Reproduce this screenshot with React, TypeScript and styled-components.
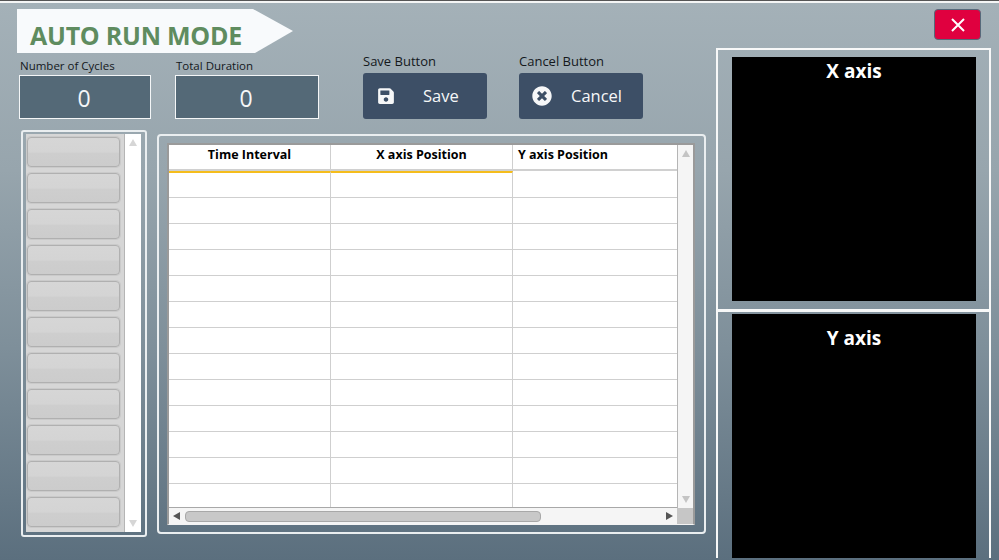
import React from "react";
import styled, { createGlobalStyle } from "styled-components";
import { FaSave, FaTimesCircle } from "react-icons/fa";

const GlobalStyle = createGlobalStyle`
  html, body {
    margin: 0;
    padding: 0;
    background: #555;
    overflow: hidden;
  }
  body {
    padding-top: 1px;
    font-family: "Open Sans", "Noto Sans", sans-serif;
  }
`;

const Screen = styled.div`
  display: flex;
  box-sizing: border-box;
  width: 999px;
  height: 559px;
  overflow: hidden;
  border-top: 2px solid #f4f5f5;
  background: linear-gradient(180deg, #a4b1b8 0%, #97a5ad 30%, #7e8f9a 62%, #5b6f7e 100%);
`;

const Main = styled.div`
  display: flex;
  flex-direction: column;
  width: 716px;
  flex: none;
`;

const Banner = styled.div`
  box-sizing: border-box;
  width: 276px;
  height: 44px;
  margin: 6px 0 0 17px;
  padding: 9px 0 0 13px;
  background: #f8fafc;
  clip-path: polygon(0 0, 236px 0, 100% 50%, 238px 100%, 0 100%);
  color: #5f8c5f;
  font-size: 25px;
  font-weight: 700;
  letter-spacing: -0.25px;
  line-height: 34px;
  white-space: nowrap;
`;

const Controls = styled.div`
  display: flex;
  align-items: flex-start;
  height: 77px;
  padding-left: 19px;
`;

const Group = styled.div<{ $left: number; $top: number }>`
  display: flex;
  flex-direction: column;
  margin-left: ${(p) => p.$left}px;
  margin-top: ${(p) => p.$top}px;
`;

const Caption = styled.div`
  height: 17px;
  padding-left: 1px;
  color: #14181c;
  font-size: 11.5px;
  line-height: 16px;
  white-space: nowrap;
`;

const ButtonCaption = styled(Caption)`
  height: 20px;
  padding-left: 0;
  font-size: 13px;
  line-height: 16px;
`;

const ValueBox = styled.div<{ $width: number }>`
  box-sizing: border-box;
  width: ${(p) => p.$width}px;
  height: 44px;
  padding-right: 2px;
  border: 1px solid #f4f6f7;
  background: #546977;
  color: #f4f6f7;
  font-size: 23px;
  line-height: 44px;
  text-align: center;
`;

const ActionButton = styled.button`
  display: flex;
  align-items: center;
  box-sizing: border-box;
  width: 124px;
  height: 46px;
  padding: 0;
  border: none;
  border-radius: 3px;
  background: #3d4f66;
  color: #f6f7f8;
  font-family: inherit;
  font-size: 16.5px;
  font-weight: 500;
`;

const ButtonLabel = styled.span`
  margin-bottom: 2px;
`;

const IconSlot = styled.span<{ $left: number; $width: number }>`
  display: flex;
  flex: none;
  box-sizing: border-box;
  width: ${(p) => p.$width}px;
  padding-left: ${(p) => p.$left}px;
`;

const Body = styled.div`
  display: flex;
  align-items: flex-start;
  padding-left: 21px;
`;

const ListPanel = styled.div`
  display: flex;
  box-sizing: border-box;
  width: 126px;
  height: 407px;
  margin-right: 10px;
  padding: 2px 4px 3px 3px;
  border: 2px solid #eaeef0;
  border-radius: 3px;
`;

const ListItems = styled.div`
  display: flex;
  flex-direction: column;
  gap: 6px;
  box-sizing: border-box;
  width: 98px;
  padding: 3px 0 0 1px;
  background: #d6d6d6;
`;

const ListItem = styled.div`
  box-sizing: border-box;
  width: 93px;
  height: 30px;
  border: 1px solid #b0b0b0;
  border-radius: 4px;
  background: linear-gradient(180deg, #d6d6d6 0%, #d4d4d4 50%, #cecece 55%, #cccccc 100%);
  box-shadow: 0 0 0 1px #cacaca;
`;

const VScroll = styled.div<{ $bg: string; $width: number }>`
  display: flex;
  flex-direction: column;
  align-items: center;
  justify-content: space-between;
  box-sizing: border-box;
  width: ${(p) => p.$width}px;
  padding: 5px 0;
  border-left: 1px solid #b5b5b5;
  background: ${(p) => p.$bg};
`;

const Arrow = styled.span<{ $dir: "up" | "down" | "left" | "right"; $color: string }>`
  flex: none;
  width: 0;
  height: 0;
  border-style: solid;
  border-color: transparent;
  ${(p) =>
    p.$dir === "up"
      ? `border-width: 0 4px 7px; border-bottom-color: ${p.$color};`
      : p.$dir === "down"
      ? `border-width: 7px 4px 0; border-top-color: ${p.$color};`
      : p.$dir === "left"
      ? `border-width: 4px 7px 4px 0; border-right-color: ${p.$color};`
      : `border-width: 4px 0 4px 7px; border-left-color: ${p.$color};`}
`;

const TablePanel = styled.div`
  box-sizing: border-box;
  width: 549px;
  height: 400px;
  margin-top: 4px;
  padding: 7px 9px 7px 8px;
  border: 2px solid #eaeef0;
  border-radius: 4px;
`;

const TableFrame = styled.div`
  display: grid;
  grid-template-columns: 1fr 16px;
  grid-template-rows: 1fr 16px;
  box-sizing: border-box;
  height: 382px;
  border: solid #9a9a9a;
  border-width: 2px 2px 1px 2px;
  border-bottom-color: #f4f4f4;
  background: #fff;
`;

const Grid = styled.div`
  display: grid;
  grid-template-columns: 162px 182px 1fr;
  align-content: start;
  overflow: hidden;
  border-bottom: 1px solid #a8a8a8;
`;

const HeadCell = styled.div<{ $left?: boolean }>`
  box-sizing: border-box;
  height: 26px;
  padding-left: ${(p) => (p.$left ? "5px" : "0")};
  border-right: ${(p) => (p.$left ? "none" : "1px solid #cfcfcf")};
  border-bottom: 2px solid #d0d0d0;
  color: #000;
  font-size: 12.5px;
  font-weight: 700;
  line-height: 20px;
  text-align: ${(p) => (p.$left ? "left" : "center")};
  white-space: nowrap;
`;

const Cell = styled.div<{ $first: boolean; $marked: boolean; $last: boolean }>`
  box-sizing: border-box;
  height: ${(p) => (p.$first ? 27 : 26)}px;
  border-top: ${(p) =>
    p.$first ? `2px solid ${p.$marked ? "#f5bd1c" : "#fff"}` : "none"};
  border-right: ${(p) => (p.$last ? "none" : "1px solid #cfcfcf")};
  border-bottom: 1px solid #cfcfcf;
`;

const HScroll = styled.div`
  display: flex;
  align-items: center;
  box-sizing: border-box;
  padding: 0 4px 0 4px;
  background: #f5f5f5;
`;

const Thumb = styled.div`
  box-sizing: border-box;
  width: 356px;
  height: 11px;
  margin: 0 auto 0 5px;
  border: 1px solid #a8a8a8;
  border-radius: 4px;
  background: #c8c8c8;
`;

const Corner = styled.div`
  background: #c6c6c6;
`;

const Side = styled.div`
  display: flex;
  flex-direction: column;
  width: 275px;
  flex: none;
`;

const CloseButton = styled.button`
  display: flex;
  align-items: center;
  justify-content: center;
  box-sizing: border-box;
  width: 47px;
  height: 31px;
  margin: 6px 10px 8px auto;
  padding: 0;
  border: 1px solid #56697a;
  border-radius: 4px;
  background: #e0003f;
`;

const AxisPanel = styled.div<{ $top: boolean }>`
  box-sizing: border-box;
  padding: ${(p) => (p.$top ? "7px 13px 8px 14px" : "2px 13px 0 14px")};
  border: solid #f7f8f8;
  border-width: ${(p) => (p.$top ? "2px 2px 3px" : "0 2px")};
`;

const AxisView = styled.div<{ $paddingTop: number }>`
  box-sizing: border-box;
  height: 244px;
  padding-top: ${(p) => p.$paddingTop}px;
  background: #000;
  color: #fff;
  font-size: 19px;
  font-weight: 700;
  line-height: 28px;
  text-align: center;
`;

const ROWS = 13;

export default function App() {
  return (
    <>
      <GlobalStyle />
      <Screen>
        <Main>
          <Banner>AUTO RUN MODE</Banner>
          <Controls>
            <Group $left={0} $top={5}>
              <Caption>Number of Cycles</Caption>
              <ValueBox $width={132}>0</ValueBox>
            </Group>
            <Group $left={24} $top={5}>
              <Caption>Total Duration</Caption>
              <ValueBox $width={144}>0</ValueBox>
            </Group>
            <Group $left={44} $top={0}>
              <ButtonCaption>Save Button</ButtonCaption>
              <ActionButton>
                <IconSlot $left={14} $width={60}>
                  <FaSave size={18} />
                </IconSlot>
                <ButtonLabel>Save</ButtonLabel>
              </ActionButton>
            </Group>
            <Group $left={32} $top={0}>
              <ButtonCaption>Cancel Button</ButtonCaption>
              <ActionButton>
                <IconSlot $left={13} $width={52}>
                  <FaTimesCircle size={20} />
                </IconSlot>
                <ButtonLabel>Cancel</ButtonLabel>
              </ActionButton>
            </Group>
          </Controls>
          <Body>
            <ListPanel>
              <ListItems>
                {Array.from({ length: 11 }, (_, i) => (
                  <ListItem key={i} />
                ))}
              </ListItems>
              <VScroll $bg="#fff" $width={17}>
                <Arrow $dir="up" $color="#d6d6d6" />
                <Arrow $dir="down" $color="#d6d6d6" />
              </VScroll>
            </ListPanel>
            <TablePanel>
              <TableFrame>
                <Grid>
                  <HeadCell>Time Interval</HeadCell>
                  <HeadCell>X axis Position</HeadCell>
                  <HeadCell $left>Y axis Position</HeadCell>
                  {Array.from({ length: ROWS * 3 }, (_, i) => (
                    <Cell
                      key={i}
                      $first={i < 3}
                      $marked={i < 2}
                      $last={i % 3 === 2}
                    />
                  ))}
                </Grid>
                <VScroll $bg="#f5f5f5" $width={16}>
                  <Arrow $dir="up" $color="#c4c4c4" />
                  <Arrow $dir="down" $color="#c4c4c4" />
                </VScroll>
                <HScroll>
                  <Arrow $dir="left" $color="#555" />
                  <Thumb />
                  <Arrow $dir="right" $color="#555" />
                </HScroll>
                <Corner />
              </TableFrame>
            </TablePanel>
          </Body>
        </Main>
        <Side>
          <CloseButton>
            <svg width="16" height="16" viewBox="0 0 16 16">
              <path d="M2 2 L14 14 M14 2 L2 14" stroke="#fff" strokeWidth="2" />
            </svg>
          </CloseButton>
          <AxisPanel $top>
            <AxisView $paddingTop={0}>X axis</AxisView>
          </AxisPanel>
          <AxisPanel $top={false}>
            <AxisView $paddingTop={10}>Y axis</AxisView>
          </AxisPanel>
        </Side>
      </Screen>
    </>
  );
}
